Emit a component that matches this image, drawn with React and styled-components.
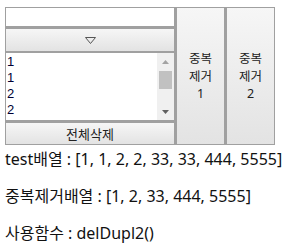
import React from "react";
import styled, { createGlobalStyle } from "styled-components";

const Global = createGlobalStyle`
  html, body { margin: 0; padding: 0; background: #fff; }
  body { font-family: "Noto Sans", "Noto Sans CJK KR", sans-serif; color: #000; }
`;

const Page = styled.div`
  padding: 7px 0 0 5px;
`;

const Controls = styled.div`
  display: flex;
  align-items: stretch;
  height: 138px;
`;

const LeftCol = styled.div`
  display: flex;
  flex-direction: column;
  width: 170px;
`;

const TextInput = styled.input`
  box-sizing: border-box;
  height: 21px;
  width: 100%;
  margin: 0;
  border: 1px solid #a0a0a0;
  border-bottom-width: 2px;
  background: #fff;
  outline: none;
  padding: 0 3px;
`;

const GrayButton = styled.button`
  box-sizing: border-box;
  margin: 0;
  padding: 0;
  border: 1px solid #a0a0a0;
  background: linear-gradient(#f6f6f6, #e3e3e3);
  font-family: "Noto Sans CJK KR", sans-serif;
  font-size: 13px;
  color: #222;
  display: flex;
  align-items: center;
  justify-content: center;
  height: ${(p) => p.$h || "auto"};
  width: ${(p) => p.$w || "100%"};
`;

const ListBox = styled.div`
  box-sizing: border-box;
  height: 70px;
  display: flex;
  border-left: 1px solid #a0a0a0;
  border-right: 1px solid #a0a0a0;
  border-top: 1px solid #a0a0a0;
  border-bottom: 2px solid #a0a0a0;
  background: #fff;
  overflow: hidden;
`;

const Items = styled.div`
  flex: 1;
  padding: 1px 0 0 1px;
  font-family: "Liberation Sans", Arial, sans-serif;
  font-size: 13px;
  line-height: 16px;
  color: #000033;
`;

const Scroll = styled.div`
  width: 17px;
  background: #f0f0f0;
  display: flex;
  flex-direction: column;
  align-items: center;
`;

const Arrow = styled.div`
  height: 17px;
  width: 17px;
  display: flex;
  align-items: center;
  justify-content: center;
`;

const Track = styled.div`
  flex: 1;
  width: 100%;
  display: flex;
  flex-direction: column;
  align-items: center;
`;

const Thumb = styled.div`
  width: 13px;
  height: 18px;
  margin-top: 1px;
  background: #c1c1c1;
`;

const BigButton = styled(GrayButton)`
  width: 50px;
  height: 138px;
  flex-direction: column;
  border-width: 1px 1px 1px 2px;
  text-align: center;
`;

const BtnLine = styled.span`
  display: block;
  height: 18px;
  line-height: 18px;
  font-size: 12.5px;
  font-family: ${(p) => (p.$num ? '"Noto Sans", sans-serif' : '"Noto Sans CJK KR", sans-serif')};
`;

const Output = styled.div`
  margin-top: 4px;
  font-size: 16px;
  line-height: 21px;
  color: #111;
`;

const Line = styled.div`
  margin-bottom: ${(p) => (p.$last ? "0" : "16px")};
  white-space: nowrap;
`;

const Tri = ({ down }) => (
  <svg width="7" height="4" viewBox="0 0 7 4">
    <polygon points={down ? "0,0 7,0 3.5,4" : "0,4 7,4 3.5,0"} fill={down ? "#606060" : "#a3a3a3"} />
  </svg>
);

export default function App() {
  return (
    <>
      <Global />
      <Page>
        <Controls>
          <LeftCol>
            <TextInput />
            <GrayButton $h="24px">
              <svg width="11" height="7" viewBox="0 0 11 7">
                <polygon points="0.5,0.5 10.5,0.5 5.5,6.5" fill="none" stroke="#555" strokeWidth="1" />
              </svg>
            </GrayButton>
            <ListBox>
              <Items>
                <div>1</div>
                <div>1</div>
                <div>2</div>
                <div>2</div>
              </Items>
              <Scroll>
                <Arrow><Tri /></Arrow>
                <Track><Thumb /></Track>
                <Arrow><Tri down /></Arrow>
              </Scroll>
            </ListBox>
            <GrayButton $h="23px">전체삭제</GrayButton>
          </LeftCol>
          <BigButton>
            <BtnLine>중복</BtnLine>
            <BtnLine>제거</BtnLine>
            <BtnLine $num>1</BtnLine>
          </BigButton>
          <BigButton>
            <BtnLine>중복</BtnLine>
            <BtnLine>제거</BtnLine>
            <BtnLine $num>2</BtnLine>
          </BigButton>
        </Controls>
        <Output>
          <Line>test배열 : [1, 1, 2, 2, 33, 33, 444, 5555]</Line>
          <Line>중복제거배열 : [1, 2, 33, 444, 5555]</Line>
          <Line $last>사용함수 : delDupl2()</Line>
        </Output>
      </Page>
    </>
  );
}
